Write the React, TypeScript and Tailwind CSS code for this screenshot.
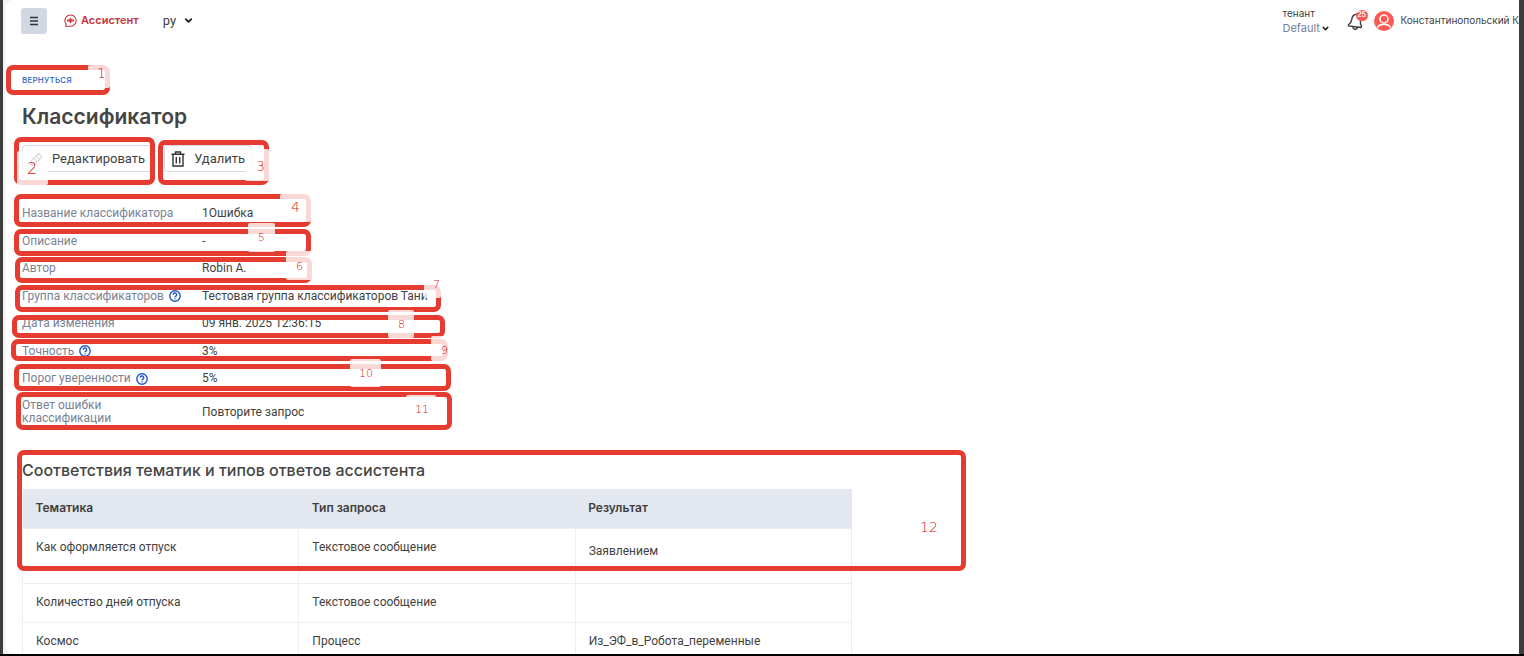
import clsx from "clsx";
import { ChevronDown } from "lucide-react";

type Field = { label: string; value: string; help?: boolean };

const fields: Field[] = [
  { label: "Название классификатора", value: "1Ошибка" },
  { label: "Описание", value: "-" },
  { label: "Автор", value: "Robin A." },
  {
    label: "Группа классификаторов",
    value: "Тестовая группа классификаторов Тани",
    help: true,
  },
  { label: "Дата изменения", value: "09 янв. 2025 12:36:15" },
  { label: "Точность", value: "3%", help: true },
  { label: "Порог уверенности", value: "5%", help: true },
];

const rows = [
  {
    topic: "Как оформляется отпуск",
    type: "Текстовое сообщение",
    result: "Заявлением",
    tall: true,
  },
  { topic: "Количество дней отпуска", type: "Текстовое сообщение", result: "" },
  { topic: "Космос", type: "Процесс", result: "Из_ЭФ_в_Робота_переменные" },
];

// Numbered callouts laid over the page: frame, pale patch, number.
const callouts = [
  {
    frame: "left-[6px] top-[65px] h-[30px] w-[104px]",
    patch: "left-[88px] top-[65px] h-[23px] w-[22px]",
    number: "left-[97px] top-[66px] text-sm",
  },
  {
    frame: "left-[14px] top-[137px] h-[48px] w-[141px]",
    patch: "left-[17px] top-[151px] h-[34px] w-[31px]",
    number: "left-[27px] top-[162px] text-base",
  },
  {
    frame: "left-[158px] top-[140px] h-[45px] w-[111px]",
    patch: "left-[245px] top-[149px] h-[32px] w-[24px]",
    number: "left-[256px] top-[159px] text-sm",
  },
  {
    frame: "left-[14px] top-[194px] h-[33px] w-[297px]",
    patch: "left-[280px] top-[194px] h-[28px] w-[31px]",
    number: "left-[291px] top-[200px] text-sm",
  },
  {
    frame: "left-[14px] top-[229px] h-[27px] w-[297px]",
    patch: "left-[248px] top-[223px] h-[29px] w-[27px]",
    number: "left-[258px] top-[231px] text-[11px]",
  },
  {
    frame: "left-[15px] top-[257px] h-[26px] w-[297px]",
    patch: "left-[286px] top-[251px] h-[29px] w-[26px]",
    number: "left-[296px] top-[260px] text-[11px]",
  },
  {
    frame: "left-[15px] top-[285px] h-[27px] w-[426px]",
    patch: "left-[424px] top-[280px] h-[18px] w-[17px]",
    number: "left-[433px] top-[278px] text-[11px]",
  },
  {
    frame: "left-[12px] top-[315px] h-[23px] w-[433px]",
    patch: "left-[388px] top-[310px] h-[28px] w-[26px]",
    number: "left-[398px] top-[318px] text-[11px]",
  },
  {
    frame: "left-[11px] top-[339px] h-[22px] w-[437px]",
    patch: "left-[431px] top-[336px] h-[25px] w-[17px]",
    number: "left-[441px] top-[344px] text-[11px]",
  },
  {
    frame: "left-[14px] top-[364px] h-[27px] w-[437px]",
    patch: "left-[350px] top-[359px] h-[28px] w-[31px]",
    number: "left-[359px] top-[367px] text-[11px]",
  },
  {
    frame: "left-[16px] top-[392px] h-[38px] w-[436px]",
    patch: "left-[406px] top-[395px] h-[28px] w-[30px]",
    number: "left-[415px] top-[403px] text-[11px]",
  },
  {
    frame: "left-[17px] top-[450px] h-[121px] w-[949px]",
    patch: "",
    number: "left-[920px] top-[520px] text-sm",
  },
];

function HelpIcon() {
  return (
    <svg
      viewBox="0 0 24 24"
      className="size-3 shrink-0"
      fill="none"
      stroke="#2156c4"
      strokeWidth="2.8"
    >
      <circle cx="12" cy="12" r="10.4" />
      <path d="M8.6 9.6a3.4 3.4 0 1 1 5.2 2.7c-1.2.8-1.8 1.3-1.8 2.3" />
      <path d="M12 16.3v2.4" />
    </svg>
  );
}

function LogoIcon() {
  return (
    <svg
      viewBox="0 0 24 24"
      className="size-[13px]"
      fill="none"
      stroke="#c9323b"
      strokeWidth="2"
      strokeLinecap="round"
    >
      <path d="M3 22.500l1-3.800A10.300 10.300 0 1 1 12 22.500z" />
      <path d="M6.500 11.500v1M9.300 10v4M12 8v8M14.700 10v4M17.500 11.500v1" strokeWidth="2.4" />
    </svg>
  );
}

function BellIcon() {
  return (
    <svg
      viewBox="0 0 24 24"
      className="size-5"
      fill="none"
      stroke="#3a3a3a"
      strokeWidth="1.7"
      strokeLinejoin="round"
      strokeLinecap="round"
    >
      <path d="M14 4C9.500 3.500 7.300 6.500 6.800 10.500c-.3 2.600-1 4.200-3.600 5.700l-.4 1.600 15.400 2 .4-1.700c-1.500-1.500-1.700-3.200-1.200-6.100" />
      <path d="M8.200 19c.1 3.400 4.600 4.200 5.500.8" />
    </svg>
  );
}

function AvatarIcon() {
  return (
    <svg viewBox="0 0 20 20" className="size-5 shrink-0">
      <circle cx="10" cy="10" r="10" fill="#fa5a55" />
      <g fill="none" stroke="#fff" strokeWidth="1.5">
        <circle cx="10" cy="8" r="4" />
        <path d="M3.500 16.500c1.300-2.400 3.300-3 5-3h3c1.700 0 3.700.6 5 3" />
      </g>
    </svg>
  );
}

function EraserIcon() {
  return (
    <svg
      viewBox="0 0 16 16"
      className="h-4 w-[14px]"
      fill="none"
      stroke="#3a3a3a"
      strokeWidth="1.3"
      strokeLinejoin="round"
    >
      <path d="M11 1.500l4 4-9 9H2v-4zM8 4.500l4 4M5.500 7l4 4" />
    </svg>
  );
}

function TrashIcon() {
  return (
    <svg
      viewBox="0 0 14 16"
      className="h-4 w-[14px]"
      fill="none"
      stroke="#333"
      strokeWidth="1.4"
    >
      <path d="M.5 3.200h13M4.500 3V1h5v2M2 3.200V15h10V3.200M5.300 6v6.500M8.700 6v6.500" />
    </svg>
  );
}

function Header() {
  return (
    <header className="flex h-[41px] items-center pl-4">
      <button
        type="button"
        aria-label="Меню"
        className="flex size-[26px] items-center justify-center rounded-[3px] bg-[#d1d8e4]"
      >
        <svg viewBox="0 0 10 10" className="size-[10px]" stroke="#333" strokeWidth="1.5">
          <path d="M1 1.500h8M1 5h8M1 8.500h8" />
        </svg>
      </button>
      <a
        href="#"
        className="ml-[17px] flex items-center gap-1 text-[11px] font-semibold text-[#c9323b]"
      >
        <LogoIcon />
        Ассистент
      </a>
      <div className="ml-6 flex items-center gap-[6px]">
        <select
          aria-label="Язык"
          className="w-[14px] appearance-none font-[Roboto,sans-serif] text-[13px] text-[#3f3f3f]"
        >
          <option>ру</option>
        </select>
        <ChevronDown className="size-[11px] text-[#1f1f1f]" strokeWidth={4} />
      </div>

      <div className="ml-auto flex items-center">
        <div className="mr-4 text-[#3f3f3f]">
          <label htmlFor="tenant" className="block text-[10px] leading-[15px]">
            тенант
          </label>
          <div className="flex items-center">
            <select
              id="tenant"
              className="w-[38px] appearance-none text-[11px] leading-[15px] text-[#76809a]"
            >
              <option>Default</option>
            </select>
            <ChevronDown className="size-[9px] text-[#1f1f1f]" strokeWidth={4} />
          </div>
        </div>
        <button type="button" aria-label="Уведомления" className="relative">
          <BellIcon />
          <span className="absolute -top-px left-[10px] flex h-[11px] w-3 items-center justify-center rounded-full bg-[#fa5a55] text-[7px] font-semibold text-white">
            25
          </span>
        </button>
        <a
          href="#"
          className="ml-2 flex items-center gap-[7px] text-[10px] whitespace-nowrap text-[#3f3f3f]"
        >
          <AvatarIcon />
          Константинопольский К
        </a>
      </div>
    </header>
  );
}

function FieldRow({ label, value, help }: Field) {
  return (
    <div className="flex items-center">
      <dt className="flex w-[180px] shrink-0 items-center gap-[5px] text-[#7a8294]">
        {label}
        {help && <HelpIcon />}
      </dt>
      <dd>{value}</dd>
    </div>
  );
}

function TopicsTable() {
  return (
    <table className="mt-[9px] w-full max-w-[830px] table-fixed border-collapse text-left font-[Roboto,sans-serif] text-xs leading-[14px]">
      <thead>
        <tr className="h-[39px] bg-[#e3e7f0] font-[Inter,sans-serif]">
          <th className="px-[13px] font-semibold">Тематика</th>
          <th className="px-[13px] font-semibold">Тип запроса</th>
          <th className="px-[13px] font-semibold">Результат</th>
        </tr>
      </thead>
      <tbody>
        {rows.map((row) => (
          <tr
            key={row.topic}
            className={clsx("align-top", row.tall ? "h-[55px]" : "h-[39px]")}
          >
            <td className="border border-[#eceef5] px-[13px] pt-[11px]">{row.topic}</td>
            <td className="border border-[#eceef5] px-[13px] pt-[11px]">{row.type}</td>
            <td
              className={clsx(
                "border border-[#eceef5] px-[13px]",
                row.tall ? "pt-[15px]" : "pt-[11px]",
              )}
            >
              {row.result}
            </td>
          </tr>
        ))}
      </tbody>
    </table>
  );
}

function Callouts() {
  return (
    <div className="pointer-events-none absolute inset-0 font-['DejaVu_Sans',sans-serif] font-extralight text-[#d4140a]">
      {callouts.map((c, i) => (
        <div key={c.frame}>
          <div
            className={clsx("absolute rounded-[7px] border-5 border-[#e53b30]", c.frame)}
          />
          {c.patch && (
            <div className={clsx("absolute rounded-[2px] bg-white/80", c.patch)} />
          )}
          <span className={clsx("absolute leading-[14px]", c.number)}>{i + 1}</span>
        </div>
      ))}
    </div>
  );
}

export default function App() {
  return (
    <div className="relative h-screen overflow-hidden bg-black pb-[2px] font-[Inter,sans-serif] text-[#3f3f3f]">
      <div className="h-full border-r-5 border-l-3 border-[#3c3c3c] bg-[#f1f1f1] pl-[2px]">
        <div className="h-full overflow-hidden rounded-l-lg bg-white">
          <Header />
          <main className="px-[17px] pt-8">
            <a
              href="#"
              className="block text-[8px] leading-[14px] font-medium tracking-wide text-[#2a5fc0]"
            >
              ВЕРНУТЬСЯ
            </a>
            <h1 className="mt-[17px] text-[21px] leading-[26px] font-semibold text-[#454545]">
              Классификатор
            </h1>
            <div className="mt-[15px] flex gap-3 font-[Roboto,sans-serif] text-[13px]">
              <button
                type="button"
                className="flex h-[27px] items-center gap-[9px] rounded-[3px] border border-[#d3d9e6] px-[6px]"
              >
                <EraserIcon />
                Редактировать
              </button>
              <button
                type="button"
                className="flex h-[27px] items-center gap-[9px] rounded-[3px] border border-[#d3d9e6] px-[6px]"
              >
                <TrashIcon />
                Удалить
              </button>
            </div>
            <dl className="mt-[35px] font-[Roboto,sans-serif] text-xs leading-[13px]">
              <div className="grid h-[178px] content-between">
                {fields.map((field) => (
                  <FieldRow key={field.label} {...field} />
                ))}
              </div>
              <div className="mt-[14px] flex items-center">
                <dt className="w-[180px] shrink-0 pr-12 text-[#7a8294]">
                  Ответ ошибки классификации
                </dt>
                <dd>Повторите запрос</dd>
              </div>
            </dl>
            <h2 className="mt-[35px] text-base leading-[20px] font-medium text-[#454545]">
              Соответствия тематик и типов ответов ассистента
            </h2>
            <TopicsTable />
          </main>
        </div>
      </div>
      <Callouts />
    </div>
  );
}
